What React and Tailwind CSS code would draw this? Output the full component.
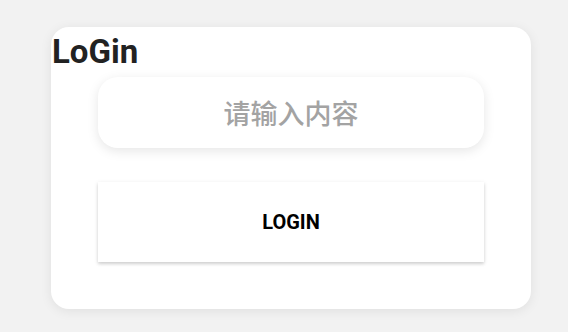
import React from "react";

const App = () => {
  return (
    <div className="min-h-[332px] w-[568px] bg-[#f2f2f2] pt-[27px] pl-[51px]">
      <div
        className="flex h-[282px] w-[480px] flex-col rounded-[18px] bg-white shadow-[0_2px_12px_rgba(0,0,0,0.08)]"
        style={{ fontFamily: "Roboto, 'Noto Sans CJK SC', sans-serif" }}
      >
        <h1 className="mt-[5px] ml-px text-[33px] leading-[40px] font-bold text-[#222]">
          LoGin
        </h1>

        <div className="flex flex-col px-[47px] pt-[5px]">
          <input
            type="text"
            placeholder="请输入内容"
            className="h-[71px] w-full rounded-[20px] bg-white text-center text-[27px] font-medium text-[#333] shadow-[0_3px_12px_rgba(0,0,0,0.1)] outline-none placeholder:text-[#a3a3a3]"
            style={{ fontFamily: "'Noto Sans CJK SC', sans-serif" }}
          />

          <button className="mt-[34px] h-[80px] w-full bg-white text-[20px] font-bold text-black shadow-[0_2px_3px_rgba(0,0,0,0.14),0_1px_5px_rgba(0,0,0,0.08)]">
            LOGIN
          </button>
        </div>
      </div>
    </div>
  );
};

export default App;
